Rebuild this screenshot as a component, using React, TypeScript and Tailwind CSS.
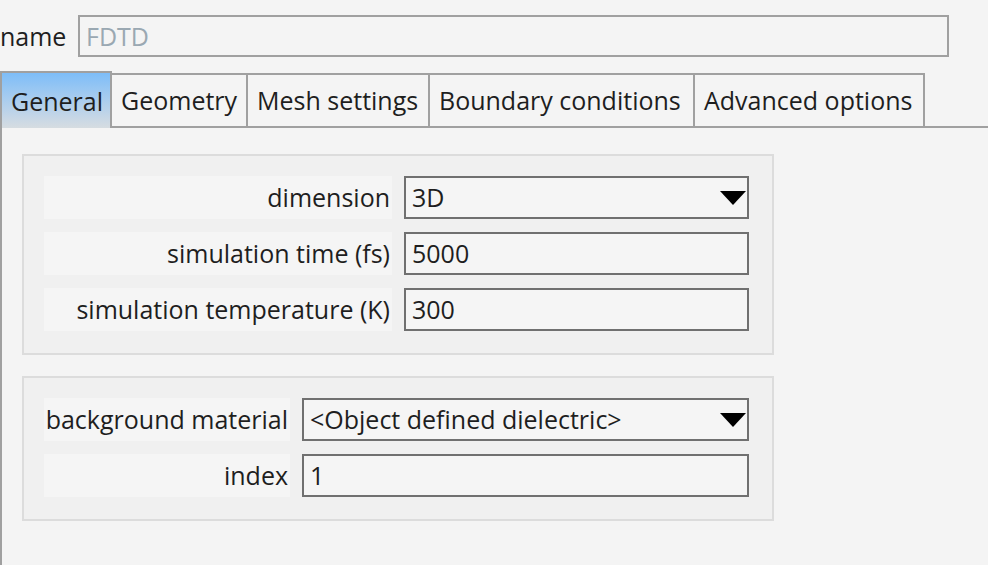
import React from "react";

const font = "font-['Open_Sans','Noto_Sans',sans-serif]";

const Arrow = () => (
    <svg width="26" height="14" viewBox="0 0 26 14" className="shrink-0">
        <path d="M0 0h26L13 14z" fill="#000"/>
    </svg>
);

function Field({value, select}: { value: string; select?: boolean }) {
    return (
        <div
            className="flex-1 h-[43px] border-2 border-[#707070] bg-[#f5f5f5] flex items-center justify-between pl-[6px] pr-[1px] text-[#1e1e1e]">
            <span>{value}</span>
            {select && <Arrow/>}
        </div>
    );
}

function Row({label, value, select, labelW}: { label: string; value: string; select?: boolean; labelW: string }) {
    return (
        <div className="flex gap-[12px]">
            <div className={`${labelW} h-[43px] bg-[#f5f5f5] flex items-center justify-end pr-[2px] text-[#1e1e1e]`}>
                {label}
            </div>
            <Field value={value} select={select}/>
        </div>
    );
}

const tabs = [
    {name: "Geometry", w: "w-[136px]"},
    {name: "Mesh settings", w: "w-[182px]"},
    {name: "Boundary conditions", w: "w-[265px]"},
];

export default function App() {
    return (
        <div className={`w-[988px] h-[565px] bg-[#f4f4f4] overflow-hidden flex flex-col text-[25px] leading-none ${font}`}>
            {/* name */}
            <div className="flex items-center mt-[15px] h-[42px]">
                <span className="text-[#1e1e1e] w-[78px]">name</span>
                <div
                    className="w-[871px] h-[42px] border-2 border-[#a0a0a0] flex items-center pl-[6px] text-[#9aa8b2]">FDTD
                </div>
            </div>

            {/* tabs */}
            <div className="mt-[16px] flex items-end border-b-2 border-[#a0a0a0] h-[53px] box-content">
                <div
                    className="w-[112px] h-[57px] -mb-[2px] border-2 border-b-0 border-[#a0a0a0] bg-linear-to-b from-[#7dbdf8] to-[#d6dce1] flex items-center pl-[9px] pt-[2px] text-[#1e1e1e]">
                    General
                </div>
                {tabs.map(t => (
                    <div key={t.name}
                         className={`${t.w} h-[53px] border-t-2 border-r-2 border-[#a0a0a0] flex items-center pl-[9px] text-[#1e1e1e]`}>
                        {t.name}
                    </div>
                ))}
                <div
                    className="w-[230px] h-[53px] border-t-2 border-r-2 border-[#a0a0a0] flex items-center pl-[9px] text-[#1e1e1e]">
                    Advanced options
                </div>
            </div>

            {/* content */}
            <div className="flex-1 border-l-2 border-[#a0a0a0] pl-[20px] pt-[26px] flex flex-col gap-[21px]">
                <div className="w-[752px] border-2 border-[#dcdcdc] bg-[#f0f0f0] p-[20px] pr-[23px] pb-[22px] flex flex-col gap-[13px]">
                    <Row label="dimension" value="3D" select labelW="w-[348px]"/>
                    <Row label="simulation time (fs)" value="5000" labelW="w-[348px]"/>
                    <Row label="simulation temperature (K)" value="300" labelW="w-[348px]"/>
                </div>
                <div className="w-[752px] border-2 border-[#dcdcdc] bg-[#f0f0f0] p-[20px] pr-[23px] pb-[22px] flex flex-col gap-[13px]">
                    <Row label="background material" value="<Object defined dielectric>" select labelW="w-[246px]"/>
                    <Row label="index" value="1" labelW="w-[246px]"/>
                </div>
            </div>
        </div>
    );
}
